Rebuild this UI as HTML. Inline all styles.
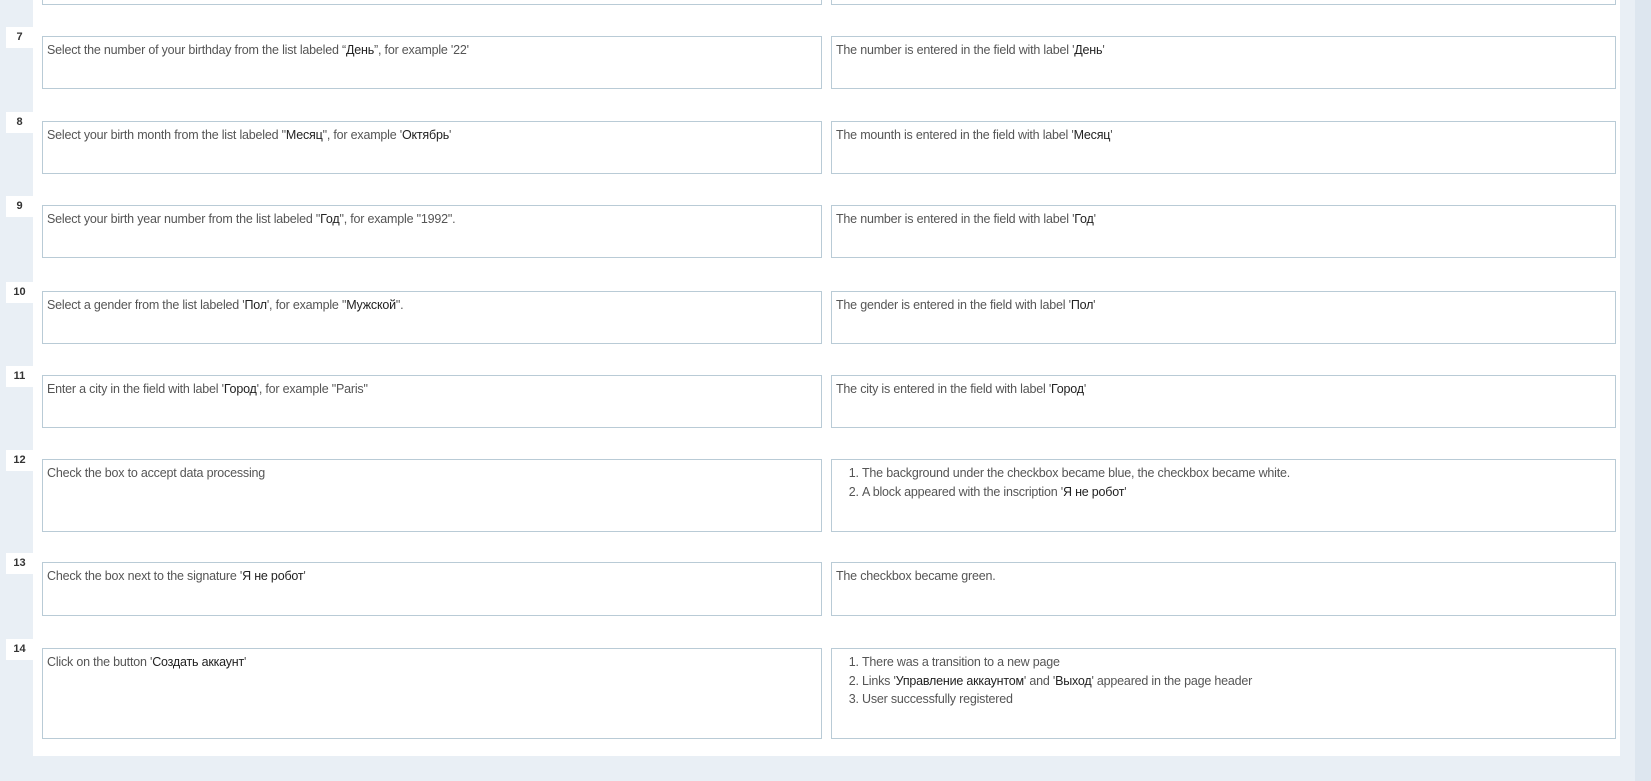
<!DOCTYPE html>
<html><head><meta charset="utf-8"><style>
html,body{margin:0;padding:0;width:1651px;height:781px;overflow:hidden;background:#e9eff5;font-family:"Liberation Sans",sans-serif;}
.panel{position:absolute;left:33px;top:0;width:1587px;height:756px;background:#fff;}
.sb{position:absolute;left:1635px;top:0;width:16px;height:781px;background:#dde6ef;}
.box{position:absolute;background:#fff;border:1px solid #b9cbd6;box-sizing:border-box;font-size:12.5px;letter-spacing:-0.2px;color:#555;padding:4px 4px;line-height:18.5px;}
.l{left:42px;width:780px;}
.r{left:831px;width:785px;}
.n{position:absolute;left:6px;width:27px;height:21px;background:#fff;font-size:11px;font-weight:bold;color:#333;text-align:center;line-height:21px;}
.c{color:#222;}
ol{margin:0;padding-left:26px;}
</style></head><body>
<div class="panel"></div>
<div class="sb"></div>
<div class="box l" style="top:-20px;height:25px"></div>
<div class="box r" style="top:-20px;height:25px"></div>

<div class="n" style="top:27px">7</div>
<div class="box l" style="top:36px;height:53px">Select the number of your birthday from the list labeled “<span class="c">День</span>”, for example '22'</div>
<div class="box r" style="top:36px;height:53px">The number is entered in the field with label '<span class="c">День</span>'</div>

<div class="n" style="top:112px">8</div>
<div class="box l" style="top:121px;height:53px">Select your birth month from the list labeled "<span class="c">Месяц</span>", for example '<span class="c">Октябрь</span>'</div>
<div class="box r" style="top:121px;height:53px">The mounth is entered in the field with label '<span class="c">Месяц</span>'</div>

<div class="n" style="top:196px">9</div>
<div class="box l" style="top:205px;height:53px">Select your birth year number from the list labeled "<span class="c">Год</span>", for example "1992".</div>
<div class="box r" style="top:205px;height:53px">The number is entered in the field with label '<span class="c">Год</span>'</div>

<div class="n" style="top:282px">10</div>
<div class="box l" style="top:291px;height:53px">Select a gender from the list labeled '<span class="c">Пол</span>', for example "<span class="c">Мужской</span>".</div>
<div class="box r" style="top:291px;height:53px">The gender is entered in the field with label '<span class="c">Пол</span>'</div>

<div class="n" style="top:366px">11</div>
<div class="box l" style="top:375px;height:53px">Enter a city in the field with label '<span class="c">Город</span>', for example "Paris"</div>
<div class="box r" style="top:375px;height:53px">The city is entered in the field with label '<span class="c">Город</span>'</div>

<div class="n" style="top:450px">12</div>
<div class="box l" style="top:459px;height:73px">Check the box to accept data processing</div>
<div class="box r" style="top:459px;height:73px"><ol><li>The background under the checkbox became blue, the checkbox became white.</li><li>A block appeared with the inscription '<span class="c">Я не робот</span>'</li></ol></div>

<div class="n" style="top:553px">13</div>
<div class="box l" style="top:562px;height:54px">Check the box next to the signature '<span class="c">Я не робот</span>'</div>
<div class="box r" style="top:562px;height:54px">The checkbox became green.</div>

<div class="n" style="top:639px">14</div>
<div class="box l" style="top:648px;height:91px">Click on the button '<span class="c">Создать аккаунт</span>'</div>
<div class="box r" style="top:648px;height:91px"><ol><li>There was a transition to a new page</li><li>Links '<span class="c">Управление аккаунтом</span>' and '<span class="c">Выход</span>' appeared in the page header</li><li>User successfully registered</li></ol></div>
</body></html>
